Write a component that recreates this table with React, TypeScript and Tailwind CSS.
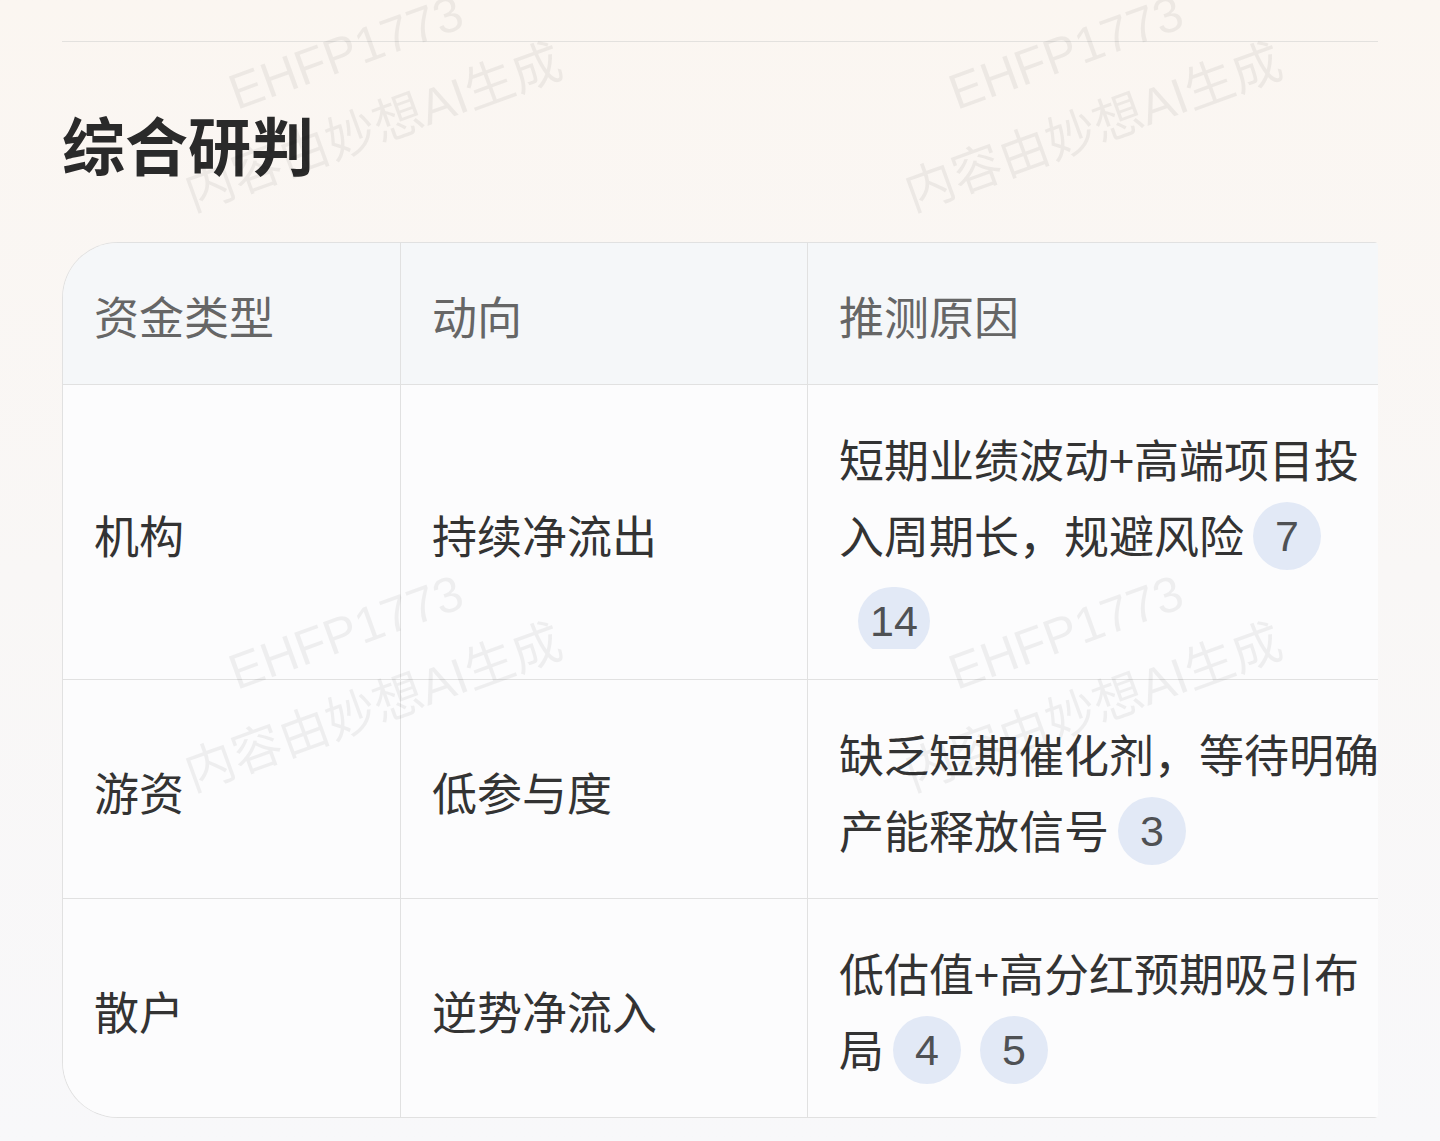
import React from "react";

type Ref = { n: string; wrapped?: boolean };

const rows: { type: string; move: string; reason: string; refs: Ref[] }[] = [
  { type: "机构", move: "持续净流出", reason: "短期业绩波动+高端项目投入周期长，规避风险", refs: [{ n: "7" }, { n: "14", wrapped: true }] },
  { type: "游资", move: "低参与度", reason: "缺乏短期催化剂，等待明确产能释放信号", refs: [{ n: "3" }] },
  { type: "散户", move: "逆势净流入", reason: "低估值+高分红预期吸引布局", refs: [{ n: "4" }, { n: "5" }] },
];

function RefBadge({ n, wrapped }: Ref) {
  // wrapped one sits lower on its own line and gets cut by the cell
  return (
    <span
      className={`relative mr-[10px] inline-flex h-[68px] min-w-[68px] items-center justify-center rounded-full bg-[#e2e9f6] px-[12px] align-top font-['Liberation_Sans',sans-serif] text-[43px] leading-none text-[#4f5154] ${
        wrapped ? "top-[14px] ml-[19px]" : "top-[5px] ml-[9px]"
      }`}
    >
      {n}
    </span>
  );
}

function Watermark() {
  const tiles = Array.from({ length: 6 });
  return (
    <div className="pointer-events-none absolute left-0 top-[-200px] grid grid-cols-[720px_720px] auto-rows-[580px]">
      {tiles.map((_, i) => (
        <div key={i} className="flex items-center justify-center">
          <div className="-rotate-20 whitespace-nowrap text-center font-['Liberation_Sans','Noto_Sans_CJK_SC',sans-serif] text-[50px] leading-[80px] text-black/[0.055]">
            <div>EHFP1773</div>
            <div>内容由妙想AI生成</div>
          </div>
        </div>
      ))}
    </div>
  );
}

export default function App() {
  return (
    <div className="relative min-h-[1141px] overflow-hidden bg-gradient-to-b from-[#fbf6f1] via-[#f9f7f6] to-[#f8f8fa] px-[62px] pt-[41px] font-['Noto_Sans_CJK_SC','Noto_Sans',sans-serif]">
      <div className="h-px bg-[#e3e1de]" />

      <h2 className="mt-[53px] text-[63px] font-bold leading-[96px] text-[#2a2a2a]">综合研判</h2>

      <div className="mt-[51px] w-[1316px] overflow-hidden rounded-r-[4px]">
        <div className="grid w-[1357px] grid-cols-[338px_407px_612px] overflow-hidden rounded-l-[56px] border-y border-l border-[#e1e1e1] text-[45px] leading-[76px]">
          <div className="border-r border-b border-[#e1e1e1] bg-[#f5f7f9] px-[31px] pt-[34.5px] pb-[30.5px] text-[#666]">资金类型</div>
          <div className="border-r border-b border-[#e1e1e1] bg-[#f5f7f9] px-[31px] pt-[34.5px] pb-[30.5px] text-[#666]">动向</div>
          <div className="border-b border-[#e1e1e1] bg-[#f5f7f9] px-[31px] pt-[34.5px] pb-[30.5px] text-[#666]">推测原因</div>

          {rows.map((r, i) => {
            const last = i === rows.length - 1;
            return (
              <React.Fragment key={r.type}>
                <div className={`flex items-center border-r border-[#e1e1e1] bg-[#fcfcfd] px-[31px] pt-[36px] pb-[30px] text-[#333] ${last ? "" : "border-b"}`}>
                  {r.type}
                </div>
                <div className={`flex items-center border-r border-[#e1e1e1] bg-[#fcfcfd] px-[31px] pt-[36px] pb-[30px] text-[#333] ${last ? "" : "border-b"}`}>
                  {r.move}
                </div>
                <div className={`border-[#e1e1e1] bg-[#fcfcfd] px-[31px] pt-[36px] pb-[30px] text-[#333] ${last ? "" : "border-b"}`}>
                  <div className="overflow-hidden">
                    {r.reason}
                    {r.refs.map((ref) => (
                      <RefBadge key={ref.n} {...ref} />
                    ))}
                  </div>
                </div>
              </React.Fragment>
            );
          })}
        </div>
      </div>

      <Watermark />
    </div>
  );
}
